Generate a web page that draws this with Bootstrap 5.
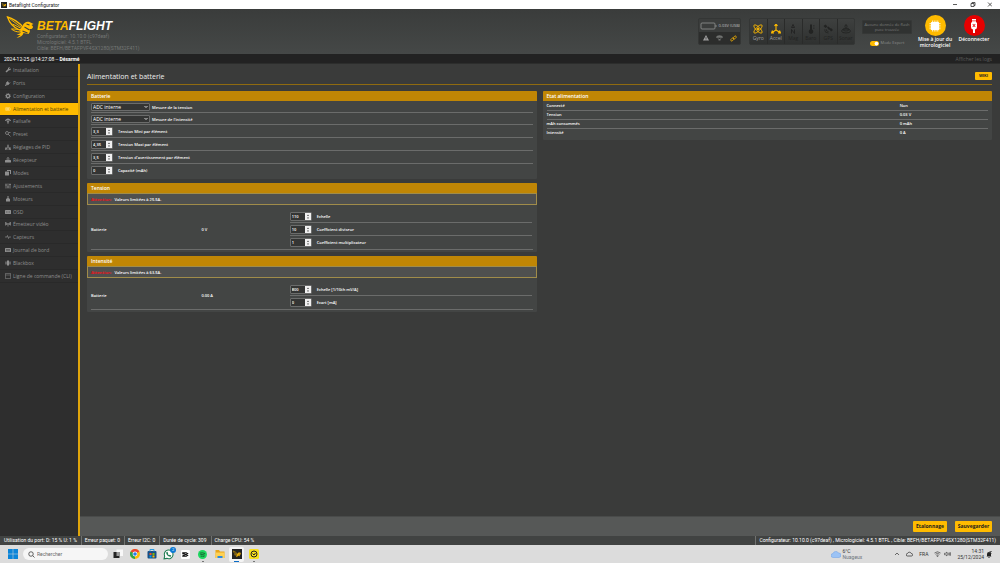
<!DOCTYPE html>
<html lang="fr">
<head>
<meta charset="utf-8">
<meta name="viewport" content="width=device-width, initial-scale=1">
<title>Betaflight Configurator</title>
<link href="https://cdn.jsdelivr.net/npm/bootstrap@5.3.0/dist/css/bootstrap.min.css" rel="stylesheet">
<style>
:root { --bf-yellow:#ffbb00; --bf-gold:#c08605; --bf-line:#6b6c6b; --bf-panel:#434544; }
body { font-family:"Open Sans",sans-serif; font-size:4px; line-height:6px; color:#fff; background:#3a3b3a; min-height:100vh; }
a { color:inherit; text-decoration:none; }
svg { display:block; flex:none; }
button { font-family:inherit; }
.titlebar, .fw-info, .stamp, .portbar, .taskbar { font-family:Roboto,sans-serif; }
.titlebar { height:9px; background:#fff; color:#222; font-size:5px; padding:0 8px 0 1px; gap:2px; }
.topbar { min-height:45px; background:linear-gradient(#3a3c3b,#454847); padding:0 8px 0 6px; }
.brand { padding-top:6px; gap:2px; }
.brand-name { font-family:"Liberation Sans",sans-serif; font-style:italic; font-weight:700; font-size:12px; line-height:14px; color:#fff; padding-top:4px; }
.brand-name span { color:var(--bf-yellow); }
.fw-info { color:#747675; font-size:5px; }
.fw-info div { line-height:6px; white-space:nowrap; }
.gauge { width:43px; height:27px; border:1px solid #343635; border-radius:2px; background:#3b3d3c; overflow:hidden; }
.gauge-top { height:13px; color:#c0c0c0; }
.gauge-low { background:#2c2d2c; height:12px; }
.sensors { width:106px; height:27px; border:1px solid #343635; border-radius:2px; background:#333534; overflow:hidden; }
.sensor { flex:1 1 0; color:#222322; border-right:1px solid #2a2b2a; padding-top:5px; background:linear-gradient(#3e403f,#2f3130); font-size:5px; }
.sensor div { margin-top:1px; }
.sensor:last-child { border-right:0; }
.sensor.active { color:#a0a0a0; }
.sensor.active svg { color:var(--bf-yellow); }
.flash-col { margin:2px 5px 0 7px; }
.flashbox { width:50px; height:14px; background:#303231; border:1px solid #353736; border-radius:1px; color:#7a7c7b; line-height:5px; padding-top:1px; }
.expert { color:#8c8e8d; gap:2px; margin-top:6px; }
.expert .form-check-input { width:9px; height:5px; min-height:0; margin:0; float:none; border:0; background-color:var(--bf-yellow); background-size:5px 5px; }
.round-btn { border:0; background:none; padding:6px 0 0; color:#fff; font-weight:600; font-size:5px; line-height:6px; width:36px; justify-content:flex-start; }
.round-btn .disc { width:21px; height:21px; border-radius:50%; background:var(--bf-yellow); flex:none; }
.round-btn .disc.stop { background:#e60000; }
.logline { height:10px; background:#222; padding:0 8px 0 4px; font-size:5px; border-bottom:1px solid #2c2d2c; }
.sidemenu { width:80px; background:#2e2e2e; border-right:2px solid #e0a50a; flex:none; }
.menu-list { height:219px; }
.menu-link { flex:1 1 0; min-height:0; padding:0 0 0 5px; gap:2px; color:#8f8f8f; font-size:5px; border-bottom:1px solid #292929; white-space:nowrap; overflow:hidden; }
.menu-link.current { background:var(--bf-yellow); color:#4a3a08; }
.menu-link.current svg { color:#ffe08a; }
.content { padding:7px 8px 0 7px; }
.page-head { height:14px; border-bottom:1px solid #8f6b10; margin-bottom:6px; padding-top:1px; }
.page-head h1 { font-size:7px; line-height:10px; margin:0; font-weight:400; color:#eee; }
.wiki-btn { background:var(--bf-yellow); color:#222; border:0; border-radius:1px; font-size:4px; line-height:8px; padding:0; width:17px; font-weight:700; }
.panels { display:grid; grid-template-columns:1fr 1fr; gap:6px; align-items:start; }
.panel { background:var(--bf-panel); border-radius:1px; margin-bottom:4px; }
.panel-title { background:var(--bf-gold); height:10px; line-height:10px; font-size:5px; font-weight:600; margin:0; padding:0 4px; color:#fff; border-radius:1px 1px 0 0; }
.panel-body { padding:0 4px 2px; font-weight:600; }
.panel label { padding-top:2px; }
.line { border-bottom:1px solid var(--bf-line); height:13px; }
.line.short { height:12px; }
.line.last { border-bottom-color:transparent; }
.pick { width:59px; height:8px; padding:0 8px 0 1px; font-size:5px; line-height:6px; color:#fff; border:1px solid #6b6c6b; border-radius:1px; background-color:#343534; background-size:4px 4px; background-position:right 1px center; background-image:url("data:image/svg+xml,%3Csvg xmlns='http://www.w3.org/2000/svg' viewBox='0 0 8 8'%3E%3Cpath d='M1 2l3 3 3-3' fill='none' stroke='white' stroke-width='1.6'/%3E%3C/svg%3E"); margin-right:2px; font-weight:400; }
.num { width:22px; height:9px; border:1px solid #6b6c6b; border-radius:1px; margin-right:5px; background:#343534; overflow:hidden; flex:none; }
.num input { width:14px; min-width:0; border:0; padding:0 0 0 1px; background:none; color:#fff; font-size:4px; line-height:7px; font-weight:600; flex:1 1 auto; outline:0; }
.num svg { background:#f0f0f0; height:7px; width:6px; }
.caution { border:1px solid #a08c4a; background:#4f504f; height:12px; line-height:11px; padding:0 3px; font-weight:600; }
.caution b { color:#e8141c; margin-right:3px; font-weight:700; }
.measure { padding:5px 4px 2px; font-weight:600; }
.measure-in { border-bottom:1px solid var(--bf-line); display:grid; grid-template-columns:25% 20% 55%; align-items:center; }
.state { width:100%; margin:0; border-collapse:collapse; table-layout:fixed; }
.state th, .state td { padding:0; line-height:8px; font-weight:600; border-bottom:1px solid var(--bf-line); }
.state th { width:80%; }
.state tr:last-child > * { border-bottom-color:transparent; }
.actions { background:#565857; height:20px; border-top:1px solid #494b4a; padding-right:8px; gap:8px; }
.act-btn { background:var(--bf-yellow); border:0; border-radius:1px; color:#1c1c1c; font-weight:700; font-size:5px; line-height:11px; padding:0; width:34px; }
.act-btn.wide { width:37px; }
.portbar { height:9px; background:#414342; font-size:5px; padding:0 4px; white-space:nowrap; }
.portbar > div { line-height:9px; }
.portbar .stat { border-right:1px solid #707270; padding-right:4px; margin-right:3px; }
.portbar .ver { border-left:1px solid #707270; padding-left:3px; }
.taskbar { height:18px; background:#dcdcdc; color:#333; padding:0 8px; }
.searchbox { width:85px; height:12px; border-radius:6px; background:#f6f6f6; margin:0 2px 0 5px; padding:0 5px; gap:2px; }
.searchbox input { border:0; background:none; outline:0; width:60px; font-size:5px; line-height:8px; padding:0; color:#444; }
.searchbox input::placeholder { color:#666; opacity:1; }
.app { width:15px; height:15px; position:relative; border:0; padding:0; background:none; border-radius:2px; }
.app.open { background:#f4f4f4; }
.app.open::after, .app.bg::after { content:""; position:absolute; bottom:0; left:5px; width:5px; height:1px; background:#0a6cc8; }
.app.bg::after { left:7px; width:2px; background:#777; }
.app .count { background:#0a78d4; width:6px; height:6px; top:0; right:0; font-size:4px; line-height:6px; }
.tray { font-size:5px; gap:6px; }
.weather { margin-right:26px; gap:2px; }
</style>
</head>
<body class="d-flex flex-column overflow-hidden">
<svg width="0" height="0" class="position-absolute" aria-hidden="true">
<symbol id="bee" viewBox="0 0 28 24"><path d="M1 2C5 3 13 7 17 13L13 15C8 13 3 8 1 2Z" fill="none" stroke="currentColor" stroke-width="1.3"/><path d="M3 3.500l12 9M6 9l8 4" stroke="currentColor" stroke-width=".9"/><path d="M5 14c4 0 7 .5 10 1l-1 2c-4 0-7-1-9-3z" fill="none" stroke="currentColor"/><path d="M16 11c1-3 4-5 7-4l4 2-2 1c2 1 2 3 0 4l-2 0c1 2 0 4-1 5l-5-1c-1 3-3 4-7 5l4-3-4 0 4-2 0-4z" fill="currentColor"/><path d="M18 12l5 3M16 16l5 2M20 9l3 1" stroke="#3d403f" stroke-width="1.100"/></symbol>
<symbol id="spin" viewBox="0 0 6 7"><path d="M2 3l1-1.500L4 3zM2 4.500l1 1.500 1-1.500z" fill="#444"/></symbol>
</svg>

<div class="titlebar d-flex align-items-center">
  <svg width="6" height="6" viewBox="0 0 28 28" style="color:#ffbb00"><rect width="28" height="28" fill="#222"/><use href="#bee" x="2" y="2" width="24" height="24"/></svg>
  <span class="me-auto">Betaflight Configurator</span>
  <svg width="42" height="7" viewBox="0 0 42 7" fill="none" stroke="#333" stroke-width=".8"><path d="M3 3.500h4M38 1.500l4 4M42 1.500l-4 4"/><path d="M21 2.500h3v3h-3zM22 2.500v-1h3v3h-1"/></svg>
</div>

<header class="topbar d-flex">
  <div class="brand d-flex me-auto">
    <svg width="29" height="24" style="color:#ffbb00"><use href="#bee"/></svg>
    <div>
      <div class="brand-name"><span>BETA</span>FLIGHT</div>
      <div class="fw-info">
        <div>Configurateur: 10.10.0 (c97deaf)</div>
        <div>Micrologiciel: 4.5.1 BTFL</div>
        <div>Cible: BEFH/BETAFPVF4SX1280(STM32F411)</div>
      </div>
    </div>
  </div>
  <div class="d-flex" style="padding-top:9px">
    <div class="gauge me-2">
      <div class="gauge-top d-flex align-items-center justify-content-between">
        <svg width="18" height="8" viewBox="0 0 18 8" fill="none" stroke="#929492" stroke-width=".8"><rect x="2" y="1" width="14" height="6" rx="1"/><path d="M17 3v2"/></svg>
        <span class="text-nowrap">0.03V (USB)</span>
      </div>
      <div class="gauge-low d-flex align-items-center justify-content-around">
        <svg width="6" height="6" viewBox="0 0 12 12"><path d="M6 0l6 11H0z" fill="#a0a0a0"/><path d="M6 4v4M6 9v1.200" stroke="#333" stroke-width="1.400"/></svg>
        <svg width="7" height="6" viewBox="0 0 14 12"><path d="M0 5.500C1-1 13-1 14 5.500z" fill="#707270"/><path d="M2 5l5 4 5-4" stroke="#707270" fill="none"/><rect x="5" y="8" width="4" height="3" fill="#707270"/></svg>
        <svg width="7" height="7" viewBox="0 0 14 14" fill="none" stroke="#e0a50a" stroke-width="1.800"><rect x="6" y="3" width="7" height="4" rx="2" transform="rotate(-45 9.500 5)"/><rect x="1" y="7" width="7" height="4" rx="2" transform="rotate(-45 4.500 9)"/></svg>
      </div>
    </div>
    <div class="sensors d-flex text-center">
      <div class="sensor active"><svg class="mx-auto" width="10" height="10" viewBox="0 0 20 20" fill="none" stroke="currentColor" stroke-width="1.700"><ellipse cx="10" cy="10" rx="11" ry="4" transform="rotate(45 10 10)"/><ellipse cx="10" cy="10" rx="11" ry="4" transform="rotate(-45 10 10)"/><circle cx="10" cy="10" r="2" fill="currentColor"/></svg><div>Gyro</div></div>
      <div class="sensor active"><svg class="mx-auto" width="10" height="10" viewBox="0 0 20 20" fill="none" stroke="currentColor" stroke-width="2.200"><path d="M10 12V2M7 4l3-4 3 4M10 12l-8 5M3 13l-2 5 5 0M10 12l8 5M17 13l2 5-5 0"/></svg><div>Accel</div></div>
      <div class="sensor"><svg class="mx-auto" width="10" height="10" viewBox="0 0 20 20" fill="none" stroke="currentColor" stroke-width="1.800"><path d="M7 7l3-6 3 6zM7 19v-8l6 8v-8"/></svg><div>Mag</div></div>
      <div class="sensor"><svg class="mx-auto" width="10" height="10" viewBox="0 0 20 20" fill="currentColor"><path d="M8 1h4v10a4.500 4.500 0 1 1-4 0z"/><path d="M14 3h3M14 6h3M14 9h3" stroke="currentColor"/></svg><div>Baro</div></div>
      <div class="sensor"><svg class="mx-auto" width="10" height="10" viewBox="0 0 20 20" fill="currentColor"><path d="M1 4l4-3 4 4-4 3zM8 7l3-2 4 4-3 3zM13 11l3-3 4 4-4 3z"/><path d="M6 10q0 5 5 5M3 11q0 7 8 7" fill="none" stroke="currentColor" stroke-width="1.500"/></svg><div>GPS</div></div>
      <div class="sensor"><svg class="mx-auto" width="10" height="10" viewBox="0 0 20 20" fill="none" stroke="currentColor" stroke-width="1.700"><ellipse cx="10" cy="14" rx="9" ry="4"/><ellipse cx="10" cy="11" rx="6" ry="3"/><path d="M10 10V3M7 5l3-4 3 4"/></svg><div>Sonar</div></div>
    </div>
    <div class="flash-col d-flex flex-column align-items-center">
      <div class="flashbox text-center">Aucune donnée de flash<br>puce trouvée</div>
      <div class="expert d-flex align-items-center"><div class="form-switch p-0 m-0 d-flex"><input class="form-check-input" type="checkbox" role="switch" id="expert" checked></div><label for="expert">Mode Expert</label></div>
    </div>
  </div>
  <button class="round-btn d-flex flex-column align-items-center"><span class="disc d-flex align-items-center justify-content-center"><svg width="12" height="12" viewBox="0 0 24 24"><rect x="4" y="4" width="16" height="16" rx="1" fill="#fff"/><path d="M7 1v22M10.500 1v22M14 1v22M17.500 1v22M1 7h22M1 10.500h22M1 14h22M1 17.500h22" stroke="#fff" stroke-width="1.500"/></svg></span><span>Mise à jour du micrologiciel</span></button>
  <button class="round-btn d-flex flex-column align-items-center" style="margin-left:3px"><span class="disc stop d-flex align-items-center justify-content-center"><svg width="10" height="16" viewBox="0 0 20 32"><path d="M6 2h8v7H6zM4 9h12v9q0 4-4 5v7H8v-7q-4-1-4-5z" fill="#fff"/><path d="M8 4v3M12 4v3M7.500 12l5 6M12.500 12l-5 6" stroke="#e60000" stroke-width="1.800"/></svg></span><span>Déconnecter</span></button>
</header>

<div class="logline d-flex align-items-center justify-content-between">
  <span class="stamp">2024-12-25 @14:27:08 -- <b>Désarmé</b></span><a href="#" style="color:#5c5c5c">Afficher les logs</a>
</div>

<main class="d-flex flex-grow-1">
  <nav class="sidemenu">
    <div class="menu-list d-flex flex-column">
      <a href="#" class="menu-link d-flex align-items-center"><svg width="6" height="6" viewBox="0 0 12 12"><path d="M1 9l5-5c-.5-2 1-4 4-4L8 3l1 1 3-1c0 3-2 4-4 3.500L3 11z" fill="currentColor"/></svg>Installation</a>
      <a href="#" class="menu-link d-flex align-items-center"><svg width="6" height="6" viewBox="0 0 12 12"><path d="M0 11l3-3-1-2 3-3 4 4-3 3-2-1-3 3zM6 3l2-2M9 6l2-2" fill="currentColor" stroke="currentColor"/></svg>Ports</a>
      <a href="#" class="menu-link d-flex align-items-center"><svg width="6" height="6" viewBox="0 0 12 12" fill="none" stroke="currentColor"><circle cx="6" cy="6" r="3.200" stroke-width="2.500"/><circle cx="6" cy="6" r="5" stroke-width="1.600" stroke-dasharray="2 1.900"/></svg>Configuration</a>
      <a href="#" class="menu-link current d-flex align-items-center" aria-current="page"><svg width="6" height="6" viewBox="0 0 12 12"><rect x="1" y="3" width="9" height="6" rx="1" fill="none" stroke="currentColor"/><path d="M3 5h5v2H3zM11 5v2" fill="currentColor" stroke="currentColor"/></svg>Alimentation et batterie</a>
      <a href="#" class="menu-link d-flex align-items-center"><svg width="6" height="6" viewBox="0 0 12 12"><path d="M0 6c1-7 11-7 12 0zM2 5l4 4 4-4M4.500 8h3v3h-3z" fill="currentColor"/></svg>Failsafe</a>
      <a href="#" class="menu-link d-flex align-items-center"><svg width="6" height="6" viewBox="0 0 12 12" fill="none" stroke="currentColor" stroke-width="1.500"><circle cx="4" cy="4" r="3"/><path d="M6 6l5 5M8 3h3"/></svg>Preset</a>
      <a href="#" class="menu-link d-flex align-items-center"><svg width="6" height="6" viewBox="0 0 12 12" fill="none" stroke="currentColor" stroke-width="1.500"><path d="M6 1v5M6 6L2 9M6 6l4 3M4 4h4"/><rect x="0" y="8" width="3" height="3"/><rect x="9" y="8" width="3" height="3"/><path d="M4 10h4"/></svg>Réglages de PID</a>
      <a href="#" class="menu-link d-flex align-items-center"><svg width="6" height="6" viewBox="0 0 12 12" fill="currentColor"><rect y="6" width="12" height="5" rx="1"/><path d="M3 5V3h6v2zM4 2V1h4v1z"/></svg>Récepteur</a>
      <a href="#" class="menu-link d-flex align-items-center"><svg width="6" height="6" viewBox="0 0 12 12" fill="currentColor"><rect y="3" width="8" height="8" rx="1"/><path d="M4 0h8v8h-2V2H4z"/></svg>Modes</a>
      <a href="#" class="menu-link d-flex align-items-center"><svg width="6" height="6" viewBox="0 0 12 12" stroke="currentColor" stroke-width="1.400"><path d="M2 1v10M6 1v10M10 1v10M0 4h4M4 8h4M8 3h4"/></svg>Ajustements</a>
      <a href="#" class="menu-link d-flex align-items-center"><svg width="6" height="6" viewBox="0 0 12 12" fill="currentColor"><path d="M5 0h2v4l3 2v5H2V6l3-2z"/></svg>Moteurs</a>
      <a href="#" class="menu-link d-flex align-items-center"><svg width="6" height="6" viewBox="0 0 12 12"><rect y="2" width="12" height="8" rx="1" fill="currentColor"/><path d="M2 6h3M7 6h3" stroke="#2e2e2e"/></svg>OSD</a>
      <a href="#" class="menu-link d-flex align-items-center"><svg width="6" height="6" viewBox="0 0 12 12" fill="none" stroke="currentColor" stroke-width="1.500"><path d="M1 2v7M11 2v7M3 3v5M9 3v5"/><path d="M4 6h4M6 4v7"/></svg>Émetteur vidéo</a>
      <a href="#" class="menu-link d-flex align-items-center"><svg width="6" height="6" viewBox="0 0 12 12" fill="none" stroke="currentColor" stroke-width="1.300"><path d="M0 6h4l1-3 2 6 1-3h4"/></svg>Capteurs</a>
      <a href="#" class="menu-link d-flex align-items-center"><svg width="6" height="6" viewBox="0 0 12 12"><rect y="2" width="12" height="8" rx="1" fill="currentColor"/><path d="M2 5h8M2 7.500h8" stroke="#2e2e2e"/></svg>Journal de bord</a>
      <a href="#" class="menu-link d-flex align-items-center"><svg width="6" height="6" viewBox="0 0 12 12" fill="currentColor"><rect x="4" y="1" width="4" height="10"/><path d="M1 3h2v6H1zM9 3h2v6H9z"/></svg>Blackbox</a>
      <a href="#" class="menu-link d-flex align-items-center"><svg width="6" height="6" viewBox="0 0 12 12" fill="none" stroke="currentColor"><rect x=".5" y="1.500" width="11" height="9"/><path d="M1 4h10"/></svg>Ligne de commande (CLI)</a>
    </div>
  </nav>

  <div class="flex-grow-1 d-flex flex-column">
    <div class="content flex-grow-1">
      <div class="page-head d-flex justify-content-between align-items-start"><h1>Alimentation et batterie</h1><button class="wiki-btn">WIKI</button></div>
      <div class="panels">
        <div>
          <section class="panel">
            <h2 class="panel-title">Batterie</h2>
            <div class="panel-body">
              <div class="line short d-flex align-items-center"><select class="form-select pick" id="vm"><option>ADC interne</option></select><label for="vm">Mesure de la tension</label></div>
              <div class="line short d-flex align-items-center"><select class="form-select pick" id="cm"><option>ADC interne</option></select><label for="cm">Mesure de l'intensité</label></div>
              <div class="line d-flex align-items-center"><div class="num d-flex"><input id="n1" inputmode="decimal" value="3,3"><svg><use href="#spin"/></svg></div><label for="n1">Tension Mini par élément</label></div>
              <div class="line d-flex align-items-center"><div class="num d-flex"><input id="n2" inputmode="decimal" value="4,35"><svg><use href="#spin"/></svg></div><label for="n2">Tension Maxi par élément</label></div>
              <div class="line d-flex align-items-center"><div class="num d-flex"><input id="n3" inputmode="decimal" value="3,5"><svg><use href="#spin"/></svg></div><label for="n3">Tension d'avertissement par élément</label></div>
              <div class="line last d-flex align-items-center"><div class="num d-flex"><input id="n4" inputmode="decimal" value="0"><svg><use href="#spin"/></svg></div><label for="n4">Capacité (mAh)</label></div>
            </div>
          </section>
          <section class="panel">
            <h2 class="panel-title">Tension</h2>
            <div class="caution"><b>Attention:</b>Valeurs limitées à 25.5A.</div>
            <div class="measure"><div class="measure-in"><span>Batterie</span><span>0 V</span><div>
              <div class="line d-flex align-items-center"><div class="num d-flex"><input id="t1" inputmode="numeric" value="110"><svg><use href="#spin"/></svg></div><label for="t1">Echelle</label></div>
              <div class="line d-flex align-items-center"><div class="num d-flex"><input id="t2" inputmode="numeric" value="10"><svg><use href="#spin"/></svg></div><label for="t2">Coefficient diviseur</label></div>
              <div class="line last d-flex align-items-center"><div class="num d-flex"><input id="t3" inputmode="numeric" value="1"><svg><use href="#spin"/></svg></div><label for="t3">Coefficient multiplicateur</label></div>
            </div></div></div>
          </section>
          <section class="panel">
            <h2 class="panel-title">Intensité</h2>
            <div class="caution"><b>Attention:</b>Valeurs limitées à 63.5A.</div>
            <div class="measure"><div class="measure-in"><span>Batterie</span><span>0.00 A</span><div>
              <div class="line d-flex align-items-center"><div class="num d-flex"><input id="i1" inputmode="numeric" value="800"><svg><use href="#spin"/></svg></div><label for="i1">Echelle [1/10th mV/A]</label></div>
              <div class="line last d-flex align-items-center"><div class="num d-flex"><input id="i2" inputmode="numeric" value="0"><svg><use href="#spin"/></svg></div><label for="i2">Ecart [mA]</label></div>
            </div></div></div>
          </section>
        </div>
        <section class="panel">
          <h2 class="panel-title">Etat alimentation</h2>
          <div class="panel-body" style="padding-top:1px">
            <table class="state">
              <tr><th scope="row">Connecté</th><td>Non</td></tr>
              <tr><th scope="row">Tension</th><td>0.03 V</td></tr>
              <tr><th scope="row">mAh consommés</th><td>0 mAh</td></tr>
              <tr><th scope="row">Intensité</th><td>0 A</td></tr>
            </table>
          </div>
        </section>
      </div>
    </div>
    <div class="actions d-flex align-items-center justify-content-end"><button class="act-btn">Etalonnage</button><button class="act-btn wide">Sauvegarder</button></div>
  </div>
</main>

<div class="portbar d-flex align-items-center">
  <div class="stat">Utilisation du port: D: 15 % U: 1 %</div><div class="stat">Erreur paquet: 0</div><div class="stat">Erreur I2C: 0</div><div class="stat">Durée de cycle: 309</div><div class="me-auto">Charge CPU: 54 %</div>
  <div class="ver">Configurateur: 10.10.0 (c97deaf) , Micrologiciel: 4.5.1 BTFL , Cible: BEFH/BETAFPVF4SX1280(STM32F411)</div>
</div>

<footer class="taskbar d-flex align-items-center">
  <svg width="10" height="10" viewBox="0 0 20 20" fill="#0a84d8"><path d="M0 0h9.500v9.500H0zM10.500 0H20v9.500h-9.500zM0 10.500h9.500V20H0zM10.500 10.500H20V20h-9.500z"/></svg>
  <div class="searchbox d-flex align-items-center"><svg width="7" height="7" viewBox="0 0 14 14" fill="none" stroke="#333" stroke-width="1.500"><circle cx="6" cy="6" r="4.500"/><path d="M9.500 9.500L13 13"/></svg><input aria-label="Rechercher" placeholder="Rechercher"></div>
  <div class="d-flex" style="gap:2px">
    <button class="app" aria-label="Bureaux"><svg class="m-auto" width="10" height="10" viewBox="0 0 20 20"><path d="M7 1h13v13H7z" fill="#f8f8f8"/><path d="M1 6h12v12H1z" fill="#222"/><path d="M7 6h6v8H7z" fill="#999"/></svg></button>
    <button class="app" aria-label="Chrome"><svg class="m-auto" width="10" height="10" viewBox="0 0 20 20"><circle cx="10" cy="10" r="10" fill="#fbbc05"/><path d="M10 10L1.300 5A10 10 0 0 1 18.700 5z" fill="#ea4335"/><path d="M10 10L1.300 5A10 10 0 0 0 10 20z" fill="#2da44e"/><circle cx="10" cy="10" r="4.800" fill="#fff"/><circle cx="10" cy="10" r="3.600" fill="#2b7de9"/></svg></button>
    <button class="app" aria-label="Store"><svg class="m-auto" width="10" height="10" viewBox="0 0 20 20"><rect x="1" y="4" width="18" height="15" rx="2" fill="#174f86"/><path d="M6 5V1h8v4" fill="none" stroke="#2b9be0" stroke-width="2"/><path d="M5 8h4v4H5z" fill="#f25022"/><path d="M11 8h4v4h-4z" fill="#7fba00"/><path d="M5 13h4v4H5z" fill="#00a4ef"/><path d="M11 13h4v4h-4z" fill="#ffb900"/></svg></button>
    <button class="app" aria-label="WhatsApp"><svg class="m-auto" width="11" height="11" viewBox="0 0 20 20"><path d="M2 18l1-5a8 8 0 1 1 4 4z" fill="#fff" stroke="#1e7d52" stroke-width="2"/><path d="M6 6l2-1 1.500 3-1 1 2.500 2.500 1-1 3 1.500-1 2C10 15 5 10 6 6z" fill="#1e7d52"/></svg><span class="count position-absolute rounded-circle text-white text-center">2</span></button>
    <button class="app" aria-label="CapCut"><svg class="m-auto" width="9" height="9" viewBox="0 0 20 20"><rect width="20" height="20" rx="3" fill="#fff"/><path d="M16 7L6 12H4M16 13L6 8H4V6h9M4 12v2h9" fill="none" stroke="#111" stroke-width="2.400"/></svg></button>
    <button class="app bg" aria-label="Spotify"><svg class="m-auto" width="9" height="9" viewBox="0 0 20 20"><circle cx="10" cy="10" r="10" fill="#1ed760"/><path d="M4 7q6-2 12 1M5 10.500q5-1.500 10 1M6 14q4-1 8 .5" stroke="#174a28" stroke-width="1.700" fill="none"/></svg></button>
    <button class="app" aria-label="Explorateur"><svg class="m-auto" width="10" height="10" viewBox="0 0 20 20"><path d="M1 2h7l2 3h9v13H1z" fill="#e8a51a"/><path d="M1 7h18v11H1z" fill="#ffd155"/><path d="M5 14h10v4H5z" fill="#2b8be0"/></svg></button>
    <button class="app open" aria-label="Betaflight"><svg class="m-auto" width="10" height="10" viewBox="0 0 28 28" style="color:#ffbb00"><rect width="28" height="28" fill="#222"/><use href="#bee" x="2" y="2" width="24" height="24"/></svg></button>
    <button class="app bg" aria-label="Application"><svg class="m-auto" width="10" height="10" viewBox="0 0 20 20"><rect width="20" height="20" rx="3" fill="#f8e01e"/><circle cx="10" cy="10" r="6" fill="none" stroke="#222" stroke-width="2"/><path d="M7 9l3 3 3-4" stroke="#222" stroke-width="2" fill="none"/></svg></button>
  </div>
  <div class="tray d-flex align-items-center ms-auto">
    <div class="weather d-flex align-items-center"><svg width="10" height="7" viewBox="0 0 20 14"><path d="M4 13a4 4 0 0 1 0-8 6 6 0 0 1 11-1 4.500 4.500 0 0 1 1 9z" fill="#9cc3f5" stroke="#6b9fe6"/></svg>
    <div>6°C<br><span class="text-secondary">Nuageux</span></div></div>
    <svg width="6" height="6" viewBox="0 0 12 12"><path d="M2 8l4-4 4 4" fill="none" stroke="#333" stroke-width="1.400"/></svg>
    <svg width="7" height="6" viewBox="0 0 14 12"><path d="M3 10a2.500 2.500 0 0 1 0-5 4 4 0 0 1 7.500 0A2.500 2.500 0 0 1 11 10z" fill="none" stroke="#333" stroke-width="1.500"/></svg>
    <span>FRA</span>
    <div class="d-flex" style="gap:3px">
      <svg width="7" height="6" viewBox="0 0 14 12" fill="none" stroke="#333" stroke-width="1.300"><path d="M1 4q6-5 12 0M3 6.500q4-3.500 8 0M5 9q2-2 4 0"/><circle cx="7" cy="10.500" r=".7"/></svg>
      <svg width="7" height="6" viewBox="0 0 14 12" fill="none" stroke="#333" stroke-width="1.200"><path d="M1 4.500h2L6 2v8L3 7.500H1zM8 4q1.500 2 0 4M10 3q2.500 3 0 6M12 2q3 4 0 8"/></svg>
    </div>
    <div class="d-flex align-items-center" style="gap:2px"><div class="text-end">14:31<br>25/12/2024</div>
    <svg width="6" height="7" viewBox="0 0 12 14"><path d="M2 10V6q0-4 4-4t4 4v4l1 1H1zM4 12h4l-2 2z" fill="#222"/><path d="M7 1h4L7 5h4" stroke="#222" stroke-width="1.300" fill="none"/></svg></div>
  </div>
</footer>
<script src="https://cdn.jsdelivr.net/npm/bootstrap@5.3.0/dist/js/bootstrap.bundle.min.js"></script>
</body>
</html>
